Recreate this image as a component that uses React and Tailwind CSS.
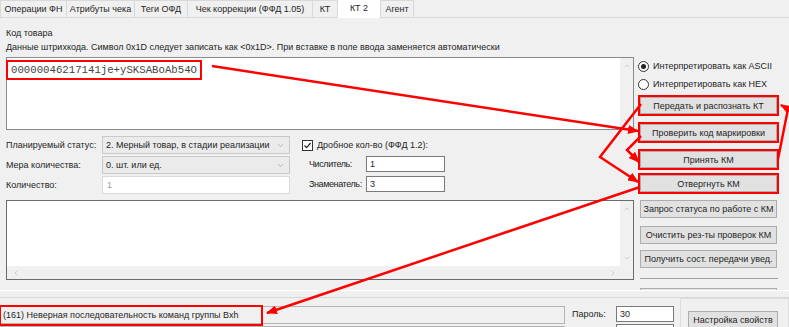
import React from "react";
import { ChevronDown, ChevronUp, ChevronLeft, ChevronRight } from "lucide-react";

const Btn = ({ children, className = "" }) => (
  <div className={`shrink-0 flex items-center justify-center bg-[#e1e1e1] border border-[#adadad] ${className}`}>
    {children}
  </div>
);

const Combo = ({ children }) => (
  <div className="w-[188px] h-[18px] flex items-center justify-between pl-[3px] pr-[4px] bg-[#ebebeb] border border-[#c9c9c9]">
    <span>{children}</span>
    <ChevronDown size={9} strokeWidth={1.5} className="text-[#8a8a8a]" />
  </div>
);

const Radio = ({ checked, children }) => (
  <div className="h-[14px] flex items-center gap-[4px]">
    <span className="w-[11px] h-[11px] rounded-full border border-[#333] bg-white flex items-center justify-center">
      {checked && <span className="w-[5px] h-[5px] rounded-full bg-[#222]" />}
    </span>
    <span>{children}</span>
  </div>
);

export default function App() {
  return (
    <div className="relative w-[789px] h-[327px] overflow-hidden bg-[#f0f0f0] text-[9px] leading-[12px] text-[#1e1e1e] font-['Liberation_Sans',Arial,sans-serif]">
      {/* tabs */}
      <div className="flex items-end h-[18px] border-b border-[#d9d9d9]">
        <div className="w-[67px] h-[17px] flex items-center justify-center border border-b-0 border-[#d9d9d9]">Операции ФН</div>
        <div className="w-[68px] h-[17px] flex items-center justify-center border border-b-0 border-l-0 border-[#d9d9d9]">Атрибуты чека</div>
        <div className="w-[53px] h-[17px] flex items-center justify-center border border-b-0 border-l-0 border-[#d9d9d9]">Теги ОФД</div>
        <div className="w-[125px] h-[17px] flex items-center justify-center border border-b-0 border-l-0 border-[#d9d9d9]">Чек коррекции (ФФД 1.05)</div>
        <div className="w-[25px] h-[17px] flex items-center justify-center border border-b-0 border-l-0 border-[#d9d9d9]">КТ</div>
        <div className="w-[43px] h-[19px] -mb-px pb-[3px] flex items-center justify-center bg-white border border-b-0 border-l-0 border-[#d9d9d9]">КТ 2</div>
        <div className="w-[33px] h-[17px] flex items-center justify-center border border-b-0 border-l-0 border-[#d9d9d9]">Агент</div>
      </div>

      {/* main area */}
      <div className="flex h-[272px] overflow-hidden">
        <div className="w-[628px] ml-[6px] flex flex-col">
          <div className="mt-[9px]">Код товара</div>
          <div className="mt-[2px]">Данные штрихкода. Символ 0x1D следует записать как &lt;0x1D&gt;. При вставке в поле ввода заменяется автоматически</div>

          <div className="mt-[4px] h-[73px] flex bg-white border border-[#8a8a8a]">
            <div className="flex-1 pt-[4px] pl-px">
              <span className="inline-block px-[3px] py-[2px] ring-2 ring-[#ff0000] font-['Liberation_Mono',monospace] text-[10.7px] leading-[12px] text-[#444]">
                00000046217141je+ySKSABoAb54O
              </span>
            </div>
            <div className="w-[13px] bg-[#f0f0f0] flex flex-col items-center justify-between py-[4px]">
              <ChevronUp size={8} strokeWidth={1.5} className="text-[#a8a8a8]" />
              <ChevronDown size={8} strokeWidth={1.5} className="text-[#a8a8a8]" />
            </div>
          </div>

          <div className="mt-[6px] flex">
            <div className="w-[96px] flex flex-col gap-[2px]">
              <div className="h-[18px] flex items-center">Планируемый статус:</div>
              <div className="h-[18px] flex items-center">Мера количества:</div>
              <div className="h-[18px] flex items-center">Количество:</div>
            </div>
            <div className="flex flex-col gap-[2px]">
              <Combo>2. Мерный товар, в стадии реализации</Combo>
              <Combo>0. шт. или ед.</Combo>
              <div className="w-[188px] h-[18px] flex items-center pl-[4px] bg-white border border-[#dadada] text-[#9a9a9a]">1</div>
            </div>
            <div className="ml-[12px] flex flex-col">
              <div className="h-[18px] flex items-center gap-[4px]">
                <span className="w-[11px] h-[11px] border border-[#333] bg-white flex items-center justify-center">
                  <svg width="9" height="9" viewBox="0 0 9 9"><path d="M1.5 4.5 L3.6 6.6 L7.6 2" stroke="#222" strokeWidth="1.2" fill="none" /></svg>
                </span>
                <span>Дробное кол-во (ФФД 1.2):</span>
              </div>
              <div className="mt-[2px] flex items-center">
                <span className="w-[64px] pl-[7px] whitespace-nowrap tracking-[-0.4px]">Числитель:</span>
                <div className="w-[79px] h-[16px] flex items-center pl-[3px] bg-white border border-[#7a7a7a]">1</div>
              </div>
              <div className="mt-[4px] flex items-center">
                <span className="w-[64px] pl-[7px] whitespace-nowrap tracking-[-0.4px]">Знаменатель:</span>
                <div className="w-[79px] h-[16px] flex items-center pl-[3px] bg-white border border-[#7a7a7a]">3</div>
              </div>
            </div>
          </div>

          <div className="mt-[6px] h-[80px] flex flex-col border border-[#6b6b6b]">
            <div className="flex-1 flex">
              <div className="flex-1 bg-white" />
              <div className="w-[13px] bg-[#f0f0f0] flex flex-col items-center justify-between py-[4px]">
                <ChevronUp size={8} strokeWidth={1.5} className="text-[#a8a8a8]" />
                <ChevronDown size={8} strokeWidth={1.5} className="text-[#a8a8a8]" />
              </div>
            </div>
            <div className="h-[13px] bg-[#f0f0f0] flex items-center justify-between pl-[5px] pr-[16px]">
              <ChevronLeft size={8} strokeWidth={1.5} className="text-[#a8a8a8]" />
              <ChevronRight size={8} strokeWidth={1.5} className="text-[#a8a8a8]" />
            </div>
          </div>
        </div>

        <div className="ml-[4px] flex flex-col">
          <div className="mt-[41px]">
            <Radio checked>Интерпретировать как ASCII</Radio>
          </div>
          <div className="mt-[4px]">
            <Radio>Интерпретировать как HEX</Radio>
          </div>
          <div className="pl-[2px] flex flex-col">
            <Btn className="w-[137px] h-[17px] mt-[6px] ring-2 ring-[#ff0000]">Передать и распознать КТ</Btn>
            <Btn className="w-[137px] h-[17px] mt-[10px] ring-2 ring-[#ff0000]">Проверить код маркировки</Btn>
            <Btn className="w-[137px] h-[17px] mt-[10px] ring-2 ring-[#ff0000]">Принять КМ</Btn>
            <Btn className="w-[137px] h-[17px] mt-[7px] ring-2 ring-[#ff0000]">Отвергнуть КМ</Btn>
            <Btn className="w-[137px] h-[18px] mt-[8px]">Запрос статуса по работе с КМ</Btn>
            <Btn className="w-[137px] h-[18px] mt-[8px]">Очистить рез-ты проверок КМ</Btn>
            <Btn className="w-[137px] h-[18px] mt-[6px]">Получить сост. передачи увед.</Btn>
            <div className="mt-[10px] w-[138px] border-t border-[#a0a0a0]" />
            <Btn className="w-[137px] h-[18px] mt-[9px]"> </Btn>
          </div>
        </div>
      </div>

      {/* splitter */}
      <div className="h-[8px] border-t border-white border-b border-b-[#d7d7d7]" />

      {/* status row */}
      <div className="flex items-start">
        <div className="w-[565px] shrink-0 flex flex-col mt-[8px]">
          <div className="h-[18px] flex items-center bg-[#f0f0f0] border border-[#b4b4b4]">
            <div className="w-[260px] h-[17px] flex items-center pl-[2px] ring-2 ring-[#ff0000]">(161) Неверная последовательность команд группы Bxh</div>
          </div>
          <div className="mt-[2px] h-[18px] bg-[#f0f0f0] border border-[#b4b4b4]" />
        </div>
        <div className="ml-[7px] mt-[10px] w-[44px] shrink-0">Пароль:</div>
        <div className="flex flex-col mt-[8px] shrink-0">
          <div className="w-[58px] h-[16px] flex items-center pl-[3px] bg-white border border-[#7a7a7a]">30</div>
          <div className="mt-[2px] w-[58px] h-[16px] bg-white border border-[#7a7a7a]" />
        </div>
        <div className="ml-[6px] flex-1 min-w-0 h-[40px] border border-[#dcdcdc] pl-[7px] pt-[12px]">
          <Btn className="w-[90px] h-[18px]">Настройка свойств</Btn>
        </div>
      </div>

      {/* annotation arrows */}
      <svg className="absolute inset-0 pointer-events-none" width="789" height="327">
        <defs>
          <marker id="ah" markerWidth="11" markerHeight="9" refX="10" refY="4.5" orient="auto" markerUnits="userSpaceOnUse">
            <path d="M0,0 L11,4.5 L0,9 z" fill="#ff0000" />
          </marker>
        </defs>
        <g stroke="#ff0000" strokeWidth="2.5" fill="none">
          <line x1="212" y1="66" x2="638" y2="131" markerEnd="url(#ah)" />
          <polyline points="641,104 600,157 638,182" markerEnd="url(#ah)" />
          <polyline points="641,136 627,150 639,162" markerEnd="url(#ah)" />
          <polyline points="778,159 788,109 781,105" markerEnd="url(#ah)" />
          <line x1="640" y1="187" x2="267" y2="313" markerEnd="url(#ah)" />
        </g>
      </svg>
    </div>
  );
}
